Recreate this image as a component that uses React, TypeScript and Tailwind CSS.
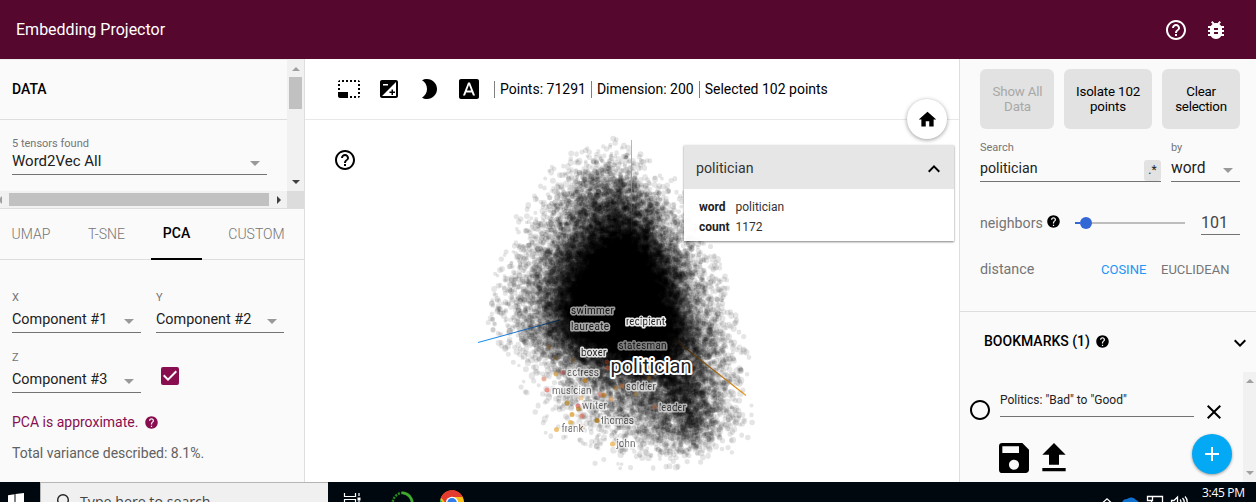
import React from "react";
import {
  MdHelpOutline, MdBugReport, MdPhotoSizeSelectSmall, MdExposure, MdBrightness2, MdFontDownload,
  MdHome, MdExpandLess, MdExpandMore, MdHelp, MdSave, MdFileUpload, MdClose, MdRadioButtonUnchecked, MdAdd, MdCheckBox,
} from "react-icons/md";

/* y, centre, left spread, right spread, relative density */
const PROFILE = [
  [138, 612, 10, 10, 0.005],
  [152, 611, 18, 16, 0.04],
  [168, 608, 23, 22, 0.32],
  [185, 608, 27, 26, 0.95],
  [205, 612, 31, 28, 1.8],
  [225, 616, 36, 30, 3.0],
  [250, 619, 40, 33, 4.6],
  [280, 620, 44, 37, 6.4],
  [310, 622, 46, 39, 7.2],
  [335, 624, 47, 42, 6.4],
  [355, 634, 44, 41, 4.8],
  [372, 654, 48, 33, 3.2],
  [390, 668, 51, 29, 2.3],
  [410, 675, 50, 27, 1.75],
  [430, 680, 48, 25, 1.05],
  [447, 679, 45, 22, 0.38],
  [460, 664, 40, 22, 0.07],
  [470, 655, 35, 20, 0.01],
];

function buildCloud(layers: number, perLayer: number) {
  let seed = 91731;
  const rnd = () => {
    seed = (seed + 0x6d2b79f5) | 0;
    let t = Math.imul(seed ^ (seed >>> 15), 1 | seed);
    t = (t + Math.imul(t ^ (t >>> 7), 61 | t)) ^ t;
    return ((t ^ (t >>> 14)) >>> 0) / 4294967296;
  };
  const gauss = () => Math.sqrt(-2 * Math.log(1 - rnd())) * Math.cos(2 * Math.PI * rnd());
  const paths: string[] = [];
  for (let l = 0; l < layers; l++) {
    let d = "";
    let n = 0;
    while (n < perLayer) {
      const y = 138 + rnd() * 332;
      let i = 0;
      while (i < PROFILE.length - 2 && PROFILE[i + 1][0] < y) i++;
      const a = PROFILE[i];
      const b = PROFILE[i + 1];
      const t = (y - a[0]) / (b[0] - a[0]);
      const at = (k: number) => a[k] + (b[k] - a[k]) * t;
      if (rnd() * 7.2 > at(4)) continue;
      const g = gauss();
      if (Math.abs(g) > 2.9) continue;
      const x = at(1) + g * (g < 0 ? at(2) : at(3));
      const r = 1.8 + rnd() * (y > 330 ? 1.6 : 1.2);
      d += `M${(x - r).toFixed(1)} ${y.toFixed(1)}a${r.toFixed(1)} ${r.toFixed(1)} 0 1 0 ${(2 * r).toFixed(1)} 0a${r.toFixed(1)} ${r.toFixed(1)} 0 1 0 ${(-2 * r).toFixed(1)} 0`;
      n++;
    }
    paths.push(d);
  }
  return paths;
}
const CLOUD = buildCloud(180, 160);

const NEIGHBORS: [number, number, string, number][] = [
  [544, 379, "#e07850", 0.5], [547, 390, "#ee7c70", 0.75], [556, 374, "#c98a20", 0.6], [562.5, 372.5, "#c04a4a", 0.5],
  [585, 380.5, "#b87412", 0.75], [567, 403, "#b98a28", 0.75], [581, 398, "#e0a040", 0.5], [578, 406, "#e06060", 0.7],
  [578.5, 409, "#b07a20", 0.7], [572, 414.5, "#dca034", 0.8], [582, 416, "#e87860", 0.7], [570.5, 422.5, "#e2b04c", 0.75],
  [556.5, 429.5, "#eab458", 0.8], [597, 420.5, "#a87414", 0.85], [612.5, 444, "#eebb60", 0.85], [600, 394.5, "#f09080", 0.6],
  [604, 395, "#b87010", 0.7], [611, 399, "#d08840", 0.6], [616, 388, "#a06a18", 0.5], [622, 386, "#d07030", 0.5],
  [654.5, 407, "#b0603c", 0.5], [608, 368, "#b04a28", 0.6], [636, 394, "#a87820", 0.4], [582, 427, "#d0a060", 0.5],
  [556, 358, "#80561c", 0.4], [574, 360, "#80561c", 0.4], [607, 362, "#a03a20", 0.5], [649, 378, "#805010", 0.5], [549, 347, "#805010", 0.4],
];

const LABELS: [string, number, number, number, number][] = [
  ["swimmer", 571, 313.5, 43, 0.6], ["laureate", 571, 329.5, 38, 0.65], ["recipient", 626, 325, 39, 0.92],
  ["statesman", 618.5, 348.5, 48, 0.5], ["boxer", 581, 355.5, 25.5, 0.88], ["actress", 567, 375.5, 32, 0.65],
  ["soldier", 626, 389.5, 30, 0.65], ["musician", 552, 393.5, 39.5, 0.65], ["writer", 582, 408.5, 25, 0.6],
  ["leader", 659, 410.5, 27, 0.6], ["thomas", 601, 423.5, 33, 0.65], ["frank", 561.5, 432, 22, 0.65], ["john", 616.5, 447, 19, 0.65],
];

function Projection() {
  return (
    <svg width="654" height="362" viewBox="305 120 654 362" className="block">
      <defs>
        <linearGradient id="up" x1="0" y1="140" x2="0" y2="232" gradientUnits="userSpaceOnUse">
          <stop offset="0" stopColor="#8cf01c" /><stop offset="0.45" stopColor="#72c41c" /><stop offset="1" stopColor="#123008" stopOpacity="0.2" />
        </linearGradient>
        <linearGradient id="west" x1="478" y1="0" x2="562" y2="0" gradientUnits="userSpaceOnUse">
          <stop offset="0" stopColor="#1e96f8" /><stop offset="0.5" stopColor="#1a70c8" /><stop offset="1" stopColor="#04152c" />
        </linearGradient>
        <linearGradient id="east" x1="675" y1="0" x2="746" y2="0" gradientUnits="userSpaceOnUse">
          <stop offset="0" stopColor="#1c0e02" /><stop offset="0.6" stopColor="#a86a14" /><stop offset="1" stopColor="#f09a12" />
        </linearGradient>
        <filter id="soft" x="-30%" y="-30%" width="160%" height="160%"><feGaussianBlur stdDeviation="12" /></filter>
      </defs>
      <path filter="url(#soft)" fillOpacity="0.95" d="M612 230L636 230L656 258L672 292L684 330L682 352L650 364L606 350L566 338L554 312L564 278L582 250Z" />
      <g fill="#000" fillOpacity="0.1">
        {CLOUD.map((d, i) => <path key={i} d={d} />)}
      </g>
      {NEIGHBORS.map(([x, y, c, o], i) => <circle key={i} cx={x} cy={y} r="2.5" fill={c} fillOpacity={o} />)}
      <rect x="631" y="140" width="1" height="92" fill="url(#up)" />
      <path d="M478 342.5L560 320" stroke="url(#west)" strokeWidth="1.1" />
      <path d="M675 340L746 395.5" stroke="url(#east)" strokeWidth="1.1" />
      <g fontFamily="Roboto, sans-serif" fontSize="10" fill="#222" stroke="#fff" strokeWidth="3.2" strokeLinejoin="round" className="[paint-order:stroke]">
        {LABELS.map(([s, x, y, w, o]) => (
          <text key={s} x={x} y={y} textLength={w} opacity={o}>{s}</text>
        ))}
        <text x="610.5" y="373" fontSize="20" textLength="81" strokeWidth="4">politician</text>
      </g>
    </svg>
  );
}

const Caret = () => <span className="mt-[3px] block h-0 w-0 border-x-5 border-t-5 border-x-transparent border-t-[#999]" />;

function Tri({ dir, dark }: { dir: "up" | "down" | "left" | "right"; dark?: boolean }) {
  const d = { up: "M0 4L4 0L8 4Z", down: "M0 0H8L4 4Z", left: "M4 0V8L0 4Z", right: "M0 0V8L4 4Z" }[dir];
  const v = dir === "up" || dir === "down";
  return <svg width={v ? 8 : 4} height={v ? 4 : 8} className="shrink-0" fill={dark ? "#404040" : "#a0a0a0"}><path d={d} /></svg>;
}

function Select({ label, value, width }: { label: string; value: string; width: string }) {
  return (
    <div className={`${width} h-[60px]`}>
      <div className="h-[20px] text-[11px] leading-[22px] text-[#757575]">{label}</div>
      <div className="flex h-[26px] items-center justify-between border-b border-[#737373] pr-[7px] text-[14.4px] text-[#212121]">
        <span className="whitespace-nowrap">{value}</span><Caret />
      </div>
    </div>
  );
}

function LeftPanel() {
  return (
    <aside className="flex w-[305px] shrink-0 flex-col border-r border-[#dedede] bg-[#fafafa]">
      <div className="flex h-[132px] border-t border-[#eee]">
        <div className="w-[287px]">
          <div className="flex h-[60px] items-center border-b border-[#ddd] pl-3 text-[14px] font-medium text-black">DATA</div>
          <div className="ml-3 w-[255px] pt-[15px]">
            <div className="h-[18px] text-[11px] leading-[18px] text-[#757575]">5 tensors found</div>
            <div className="flex h-[22px] items-center justify-between border-b border-[#737373] pr-[7px] pb-[4px] text-[15px] text-[#212121]">
              <span>Word2Vec All</span><Caret />
            </div>
          </div>
        </div>
        <div className="flex w-[17px] flex-col items-center justify-between bg-[#f1f1f1] pt-[7px] pb-[7px]">
          <div className="flex flex-col items-center gap-[6px]"><Tri dir="up" /><span className="h-8 w-[13px] bg-[#c1c1c1]" /></div>
          <Tri dir="down" dark />
        </div>
      </div>
      <div className="flex h-[17px] bg-[#f1f1f1]">
        <div className="flex w-[287px] items-center">
          <span className="-ml-[2px]"><Tri dir="left" /></span>
          <span className="ml-[7px] h-[13px] w-[260px] bg-[#c1c1c1]" />
          <span className="ml-2"><Tri dir="right" dark /></span>
        </div>
        <div className="flex-1 bg-[#dcdcdc]" />
      </div>
      <div className="flex h-[52px] gap-[14px] border-y border-[#ddd] text-[14px] leading-[50px] font-light text-[#757575]">
        <span className="w-[62px] text-center">UMAP</span>
        <span className="w-[61px] text-center">T-SNE</span>
        <span className="h-[51px] w-[51px] border-b-2 border-black text-center leading-[49px] font-medium text-black">PCA</span>
        <span className="w-[81px] text-center">CUSTOM</span>
      </div>
      <div className="px-3 pt-[27px]">
        <div className="flex gap-[15px]">
          <Select label="X" value="Component #1" width="w-[129px]" />
          <Select label="Y" value="Component #2" width="w-[128px]" />
        </div>
        <div className="flex">
          <Select label="Z" value="Component #3" width="w-[129px]" />
          <MdCheckBox className="mt-[17px] ml-[17px] text-[24px] text-[#880e4f]" />
        </div>
        <div className="mt-[5px] flex h-[20px] items-center text-[14px] text-[#880e4f]"><span>PCA is approximate.</span><MdHelp className="ml-[6px] text-[15px]" /></div>
        <div className="mt-[11px] text-[14px] leading-5 text-[#616161]">Total variance described: 8.1%.</div>
      </div>
    </aside>
  );
}

function Center() {
  return (
    <main className="relative w-[654px] shrink-0 bg-white">
      <div className="flex h-[61px] items-center border-b border-[#e8e8e8] pl-8 text-[14px] text-black">
        <div className="flex gap-4 text-[24px]">
          <MdPhotoSizeSelectSmall /><MdExposure /><MdBrightness2 /><MdFontDownload />
        </div>
        <div className="ml-[13px] flex leading-[17px]">
          <span className="border-l border-[#808080] pr-[5px] pl-[5px]">Points: 71291</span>
          <span className="border-l border-[#808080] pr-[5px] pl-[5px]">Dimension: 200</span>
          <span className="border-l border-[#808080] pl-[5px]">Selected 102 points</span>
        </div>
      </div>
      <Projection />
      <MdHelpOutline className="absolute top-[89px] left-[28px] text-[24px]" />
      <div className="absolute top-[40px] left-[602px] flex h-10 w-10 items-center justify-center rounded-full bg-white shadow-[0_1px_4px_rgba(0,0,0,0.4)]">
        <MdHome className="text-[21px]" />
      </div>
      <section className="absolute top-[86px] left-[379px] h-[96px] w-[270px] bg-white/95 shadow-[0_1px_2px_rgba(0,0,0,0.5)]">
        <div className="flex h-[44px] items-center justify-between bg-[#e6e6e6] pr-2 pl-3 text-[14.2px] text-[#333]">
          <span className="mt-[3px]">politician</span><MdExpandLess className="mt-[3px] text-[24px] text-black" />
        </div>
        <div className="grid grid-cols-[36.5px_1fr] pt-[8px] pl-[15px] text-[12px] leading-5 text-[#333]">
          <b className="font-bold text-[#222]">word</b><span>politician</span>
          <b className="font-bold text-[#222]">count</b><span>1172</span>
        </div>
      </section>
    </main>
  );
}

function RightPanel() {
  return (
    <aside className="relative flex flex-1 flex-col border-l border-[#dedede] bg-[#fafafa]">
      <div className="flex h-[252px] flex-col pt-[10px] pl-5">
        <div className="flex h-[60px] gap-[10px] text-center text-[13.33px] leading-[15px] text-black">
          <button className="w-[74px] rounded-[6px] bg-[#e2e2e2] pl-[1px] tracking-[-0.2px] text-[#a8a8a8]">Show All<br />Data</button>
          <button className="w-[88px] rounded-[6px] bg-[#e2e2e2] tracking-[-0.15px]">Isolate 102<br />points</button>
          <button className="w-[78px] rounded-[6px] bg-[#e2e2e2] tracking-[-0.25px]">Clear<br />selection</button>
        </div>
        <div className="flex gap-[10px] pt-[9px]">
          <div className="w-[181px]">
            <div className="h-[20px] text-[11px] leading-[20px] text-[#757575]">Search</div>
            <div className="flex h-[24px] justify-between border-b border-[#737373] text-[14.2px] leading-[20px] text-[#222]">
              <span>politician</span><span className="mt-[2px] h-[21px] w-[17px] rounded-[3px] bg-[#e2e2e2] text-center text-[12px] leading-5">.*</span>
            </div>
          </div>
          <div className="w-[69px]">
            <div className="h-[20px] text-[11px] leading-[20px] text-[#757575]">by</div>
            <div className="flex h-[24px] items-center justify-between border-b border-[#737373] pr-[7px] pb-[2px] text-[15.6px] text-[#222]">
              <span className="pt-[1px]">word</span><Caret />
            </div>
          </div>
        </div>
        <div className="mt-[28px] flex h-[26px] text-[14.2px] text-[#757575]">
          <span className="w-[66px] leading-[26px]">neighbors</span>
          <MdHelp className="mt-[4px] text-[15px] text-black" />
          <div className="mt-[4px] ml-[14px] flex h-[18px] w-[110px] items-center">
            <span className="h-[2px] w-[5px] bg-[#3367d6]" /><span className="h-3 w-3 rounded-full bg-[#3367d6]" /><span className="h-[2px] flex-1 bg-[#bdbdbd]" />
          </div>
          <span className="ml-4 h-[25px] w-[39px] border-b border-[#737373] text-[16px] leading-[26px] text-[#444]">101</span>
        </div>
        <div className="mt-[23px] flex text-[14.3px] leading-[20px] text-[#757575]">
          <span className="w-[121px]">distance</span>
          <span className="w-[60px] pt-[1px] text-[13px] text-[#2196f3]">COSINE</span>
          <span className="pt-[1px] text-[13px]">EUCLIDEAN</span>
        </div>
      </div>
      <div className="flex h-[62px] items-center border-t border-[#ddd] pr-1 pb-[2px] pl-6 text-[14px] font-medium text-black">
        <span>BOOKMARKS (1)</span><MdHelp className="ml-[5px] text-[15px]" /><MdExpandMore className="mt-[3px] ml-auto text-[24px]" />
      </div>
      <div className="flex flex-1">
        <div className="w-[283px]">
          <div className="flex h-[60px] pl-2">
            <MdRadioButtonUnchecked className="mt-[25px] text-[24px]" />
            <div className="ml-2 h-[44px] w-[194px] border-b border-[#737373] pt-[17px] text-[12px] leading-5 text-[#212121]">Politics: "Bad" to "Good"</div>
            <MdClose className="mt-[27px] ml-2 text-[24px]" />
          </div>
          <div className="mt-[5px] flex pl-[34px] text-[40px]"><MdSave /><MdFileUpload /></div>
        </div>
        <div className="-mt-[1px] flex flex-1 flex-col items-center justify-between bg-[#f1f1f1] pt-[7px] pb-[7px]"><Tri dir="up" /><Tri dir="down" /></div>
      </div>
      <div className="absolute top-[375px] left-[232px] flex h-10 w-10 items-center justify-center rounded-full bg-[#03a9f4] text-[24px] text-white shadow-[0_1px_3px_rgba(0,0,0,0.4)]"><MdAdd /></div>
    </aside>
  );
}

function Taskbar() {
  return (
    <footer className="flex h-[20px] items-start overflow-hidden bg-[#00080f] text-white">
      <svg width="40" height="20" fill="#fff"><path d="M8 13.2L14.5 12.2V20H8ZM15.5 12L24 11V20H15.5Z" /></svg>
      <div className="flex h-[20px] w-[288px] border-t border-l border-[#b5b5b5] bg-[#f0f0f0] pl-[15px]">
        <svg width="14" height="20" fill="none" stroke="#222" strokeWidth="1.4"><circle cx="7" cy="17" r="5.3" /></svg>
        <span className="ml-[10px] pt-[9px] font-['Open_Sans'] text-[14.2px] leading-[20px] whitespace-nowrap text-[#444]">Type here to search</span>
      </div>
      <svg width="770" height="20" viewBox="328 0 770 20" className="w-[770px] shrink-0">
        <g fill="none" stroke="#fff" strokeWidth="1.2">
          <path d="M344.5 11V14.5H355.5V11M344.5 20V17.5H355.5V20M359 11V14M359 18.5V20" />
        </g>
        <rect x="357.5" y="15.5" width="3" height="3" fill="#fff" />
        <path d="M392.5 23A10.2 11.5 0 0 1 402 10.8" fill="none" stroke="#2a8a1c" strokeWidth="2.5" strokeDasharray="2 1.2" />
        <path d="M402 10.8A10.2 11.5 0 0 1 412.5 22" fill="none" stroke="#3cab2e" strokeWidth="2.8" />
        <circle cx="452" cy="20.5" r="12" fill="#fbc116" />
        <path d="M440 19A12 12 0 0 1 462.8 15H452L447 23L441.5 16Z" fill="#e33b2e" />
        <path d="M440 17L447 26H440Z" fill="#2da94f" />
        <circle cx="452" cy="21" r="6.2" fill="#fff" /><circle cx="452" cy="21" r="4.9" fill="#2f7de9" />
      </svg>
      <svg width="92" height="20" viewBox="1098 0 92 20" fill="none" stroke="#fff" strokeWidth="1.3" className="shrink-0">
        <path d="M1103 20.5L1107 16.8L1111 20.5" />
        <path d="M1122 21A5 5 0 0 1 1127 17A6 6 0 0 1 1136 18A5 5 0 0 1 1139 21Z" fill="#0f72d0" stroke="none" />
        <path d="M1152.5 14.5H1162.5V21M1151.5 18.5V21M1147.5 14.5H1152.5V18.5H1147.5Z" />
        <path d="M1171.5 20V18.5H1174L1177.5 15V21M1180 17.5Q1181.5 19 1180.5 21M1182.5 16Q1184.8 18.5 1184 21M1185 14.5Q1187.8 17.5 1187 21" />
      </svg>
      <span className="ml-3 font-['Open_Sans'] text-[12px] leading-[21px] tracking-[-0.3px] whitespace-nowrap">3:45 PM</span>
    </footer>
  );
}

export default function App() {
  return (
    <div className="flex h-[502px] w-[1256px] flex-col overflow-hidden font-['Roboto',sans-serif]">
      <header className="flex h-[59px] shrink-0 items-center justify-between bg-[#55072d] pr-[28px] pl-4 text-white">
        <h1 className="text-[16px]">Embedding Projector</h1>
        <div className="flex gap-4 text-[24px]"><MdHelpOutline /><MdBugReport /></div>
      </header>
      <div className="flex h-[423px] shrink-0"><LeftPanel /><Center /><RightPanel /></div>
      <Taskbar />
    </div>
  );
}
